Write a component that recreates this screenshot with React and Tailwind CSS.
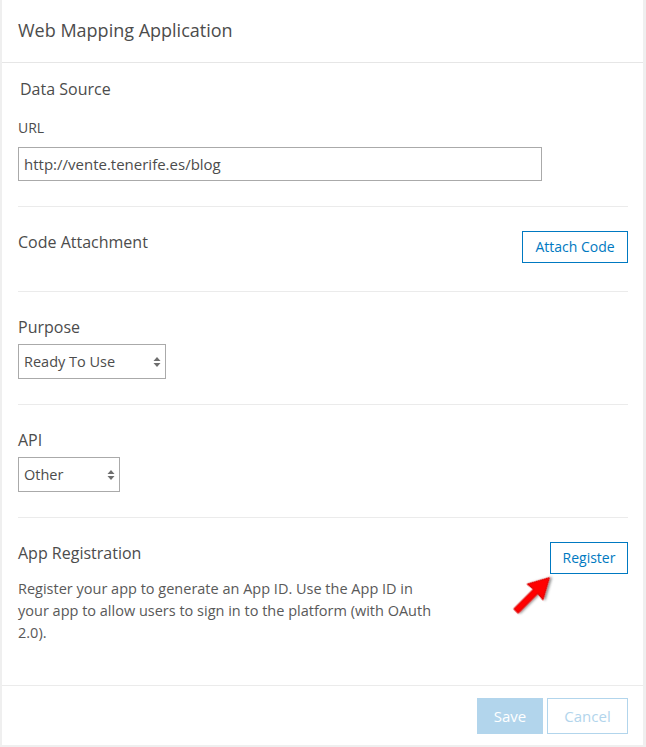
import React from 'react';

// Little up/down caret shown at the right of the select boxes
function SelectCaret() {
  return (
    <svg width="8" height="11" viewBox="0 0 8 11" className="pointer-events-none absolute right-[5px] top-1/2 -translate-y-1/2">
      <path d="M4 0.5 L7.5 4.5 L0.5 4.5 Z" fill="#6e6e6e" />
      <path d="M4 10.5 L7.5 6.5 L0.5 6.5 Z" fill="#6e6e6e" />
    </svg>
  );
}

function SelectBox({ width, value, options }) {
  return (
    <div className={`relative mt-[5px] h-[35px] ${width}`}>
      <select
        defaultValue={value}
        className="h-full w-full appearance-none border border-[#aaaaaa] bg-white pl-[5px] pr-5 text-[14.5px] text-[#4c4c4c] outline-none"
      >
        {options.map((o) => (
          <option key={o}>{o}</option>
        ))}
      </select>
      <SelectCaret />
    </div>
  );
}

// Red annotation arrow pointing at the Register button
function RedArrow() {
  return (
    <svg width="48" height="48" viewBox="0 0 48 48" className="absolute left-[-40px] top-[27px]">
      <defs>
        <filter id="arrowShadow" x="-30%" y="-30%" width="160%" height="160%">
          <feDropShadow dx="1.5" dy="1.5" stdDeviation="1.2" floodColor="#000" floodOpacity="0.45" />
        </filter>
      </defs>
      <g transform="translate(6 42) rotate(-45)" filter="url(#arrowShadow)">
        <path
          d="M0 -3 L28 -3 L27 -11 L47 0 L27 11 L28 3 L0 3 Z"
          fill="#ff0000"
          stroke="#e00000"
          strokeWidth="1.2"
          strokeLinejoin="round"
        />
      </g>
    </svg>
  );
}

export default function App() {
  return (
    <div className="h-[747px] w-full bg-[#efefef] font-['Open_Sans',sans-serif]">
      <div className="ml-[2px] flex h-[745px] w-[641px] flex-col bg-white">
        {/* Header */}
        <div className="flex h-[63px] items-center border-b border-[#e6e6e6] px-4 pb-[2px]">
          <h1 className="text-[18px] text-[#4c4c4c]">Web Mapping Application</h1>
        </div>

        {/* Body */}
        <div className="flex-1 pl-4 pr-[15px]">
          {/* Data Source */}
          <div className="border-b border-[#ebebeb] pt-[14px] pb-[25px]">
            <div className="pl-[2px] text-base leading-6 text-[#4c4c4c]">Data Source</div>
            <div className="mt-[17px] text-sm leading-5 text-[#4c4c4c]">URL</div>
            <input
              readOnly
              value="http://vente.tenerife.es/blog"
              className="mt-[9px] h-[34px] w-[524px] border border-[#aaaaaa] px-[5px] text-[15px] text-[#4c4c4c] outline-none"
            />
          </div>

          {/* Code Attachment */}
          <div className="flex items-start justify-between border-b border-[#ebebeb] pt-[23px] pb-[28px]">
            <div className="text-base leading-6 text-[#4c4c4c]">Code Attachment</div>
            <button className="mt-px h-[32px] w-[106px] border border-[#0079c1] bg-white text-sm text-[#0079c1]">
              Attach Code
            </button>
          </div>

          {/* Purpose */}
          <div className="border-b border-[#ebebeb] pt-[23px] pb-[25px]">
            <div className="text-base leading-6 text-[#4c4c4c]">Purpose</div>
            <SelectBox width="w-[148px]" value="Ready To Use" options={['Ready To Use', 'In Development']} />
          </div>

          {/* API */}
          <div className="border-b border-[#ebebeb] pt-[23px] pb-[25px]">
            <div className="text-base leading-6 text-[#4c4c4c]">API</div>
            <SelectBox width="w-[102px]" value="Other" options={['Other', 'JavaScript', 'Flex']} />
          </div>

          {/* App Registration */}
          <div className="flex items-start justify-between pt-[23px]">
            <div>
              <div className="text-base leading-6 text-[#4c4c4c]">App Registration</div>
              <p className="mt-[13px] text-[14.5px] leading-[22px] text-[#595959]">
                Register your app to generate an App ID. Use the App ID in
                <br />
                your app to allow users to sign in to the platform (with OAuth
                <br />
                2.0).
              </p>
            </div>
            <div className="relative mt-px">
              <button className="h-[32px] w-[78px] border border-[#0079c1] bg-white text-sm text-[#0079c1]">
                Register
              </button>
              <RedArrow />
            </div>
          </div>
        </div>

        {/* Footer */}
        <div className="flex h-[60px] justify-end gap-1 border-t border-[#ebebeb] pt-[12px] pr-[15px]">
          <button className="h-[36px] w-[66px] bg-[#b2d5ec] text-[15px] text-white">Save</button>
          <button className="h-[36px] w-[81px] border border-[#b2d5ec] bg-white text-[15px] text-[#b2d5ec]">
            Cancel
          </button>
        </div>
      </div>
    </div>
  );
}
